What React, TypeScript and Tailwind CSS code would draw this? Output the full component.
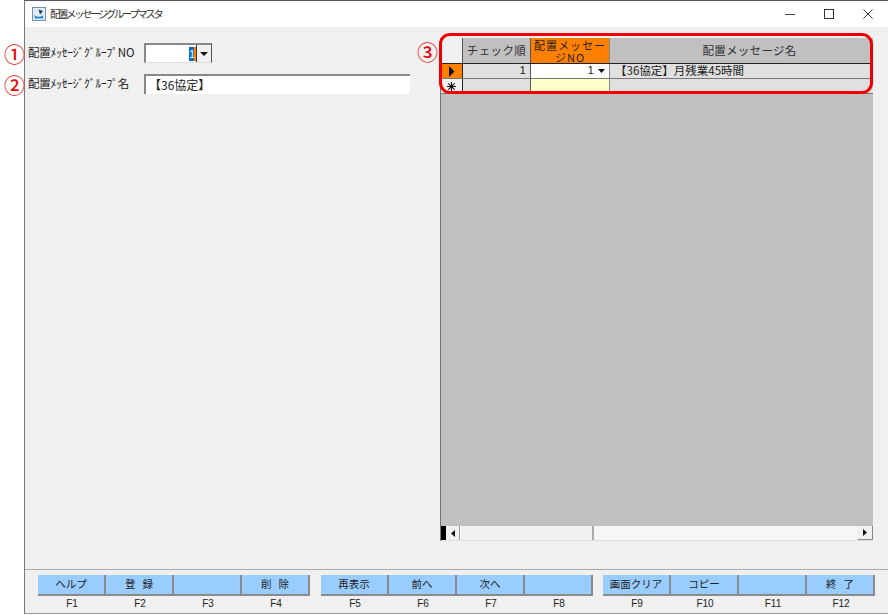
import React from 'react';

const font = "font-['Noto_Sans_CJK_JP','Liberation_Sans',sans-serif]";

const leftKeys = [
  { label: 'ヘルプ', key: 'F1' },
  { label: '登 録', key: 'F2' },
  { label: '', key: 'F3' },
  { label: '削 除', key: 'F4' },
];
const midKeys = [
  { label: '再表示', key: 'F5' },
  { label: '前へ', key: 'F6' },
  { label: '次へ', key: 'F7' },
  { label: '', key: 'F8' },
];
const rightKeys = [
  { label: '画面クリア', key: 'F9' },
  { label: 'コピー', key: 'F10' },
  { label: '', key: 'F11' },
  { label: '終 了', key: 'F12' },
];

function KeyGroup({ keys }: { keys: { label: string; key: string }[] }) {
  return (
    <div className="flex">
      {keys.map((k) => (
        <div key={k.key} className="w-[68px] flex flex-col items-center">
          <div className="w-full h-[21px] bg-[#99ccff] border-r-2 border-b-2 border-[#8a8a8a] flex items-center justify-center text-[10.5px] leading-none text-[#222] whitespace-pre">
            {k.label.replace(' ', '   ')}
          </div>
          <div className="mt-[1px] text-[10px] leading-[14px] text-[#222] font-['Liberation_Sans',sans-serif]">{k.key}</div>
        </div>
      ))}
    </div>
  );
}

function FormRow({ num, label, children }: { num: string; label: string; children: React.ReactNode }) {
  return (
    <div className="flex items-center h-[20px]">
      <span className="w-[24px] text-[21px] leading-none font-medium text-[#e01010] text-left -ml-[21px]">{num}</span>
      <span className="w-[116px] text-[11.5px] tracking-[-0.2px] text-[#222] whitespace-nowrap">{label}</span>
      {children}
    </div>
  );
}

function Grid() {
  return (
    <div className="relative w-[433px] h-[503px] flex flex-col bg-[#c0c0c0] border-l border-[#777] text-[#222]">
      {/* header */}
      <div className="flex h-[26px] border-b border-[#222] text-[11.5px]">
        <div className="w-[22px] bg-[#f0f0f0] border-r border-[#555]" />
        <div className="w-[68px] bg-[#c0c0c0] border-r border-[#555] flex items-center justify-center tracking-[0.4px] text-[#333] whitespace-nowrap">チェック順</div>
        <div className="w-[79px] bg-[#ff8000] border-r border-[#888] flex flex-col items-center justify-center text-[11px] leading-[12px] tracking-[1px] text-[#222]">
          <span className="whitespace-nowrap">配置メッセー</span>
          <span>ジNO</span>
        </div>
        <div className="flex-1 bg-[#c0c0c0] flex items-center justify-center pl-[16px] tracking-[0.3px] text-[#333]">配置メッセージ名</div>
      </div>
      {/* current row */}
      <div className="flex h-[15px] border-b border-[#777] text-[11.5px] leading-none">
        <div className="w-[22px] bg-[#ff8000] border-r border-[#222] flex items-center justify-center">
          <svg width="7" height="11" viewBox="0 0 7 11"><path d="M1 0 L6.5 5.5 L1 11 Z" fill="#111" /></svg>
        </div>
        <div className="w-[68px] bg-[#e0e0e0] border-r border-[#555] flex items-center justify-end pr-[4px] font-['Liberation_Sans',sans-serif]">1</div>
        <div className="w-[79px] bg-white border-r border-[#888] flex items-center justify-end">
          <span className="font-['Liberation_Sans',sans-serif]">1</span>
          <span className="w-[15px] h-full flex items-center justify-center">
            <svg width="7" height="4" viewBox="0 0 7 4"><path d="M0 0 H7 L3.5 4 Z" fill="#111" /></svg>
          </span>
        </div>
        <div className="flex-1 bg-[#e0e0e0] flex items-center pl-[5px] whitespace-nowrap">【36協定】月残業45時間</div>
      </div>
      {/* new row */}
      <div className="flex h-[15px] border-b border-[#777] text-[12px] leading-none">
        <div className="w-[22px] bg-[#f0f0f0] border-r border-[#222] flex items-center justify-center">
          <svg width="9" height="9" viewBox="0 0 9 9" stroke="#111" strokeWidth="1.1"><path d="M4.5 0 V9 M0 4.5 H9 M1.3 1.3 L7.7 7.7 M7.7 1.3 L1.3 7.7" /></svg>
        </div>
        <div className="w-[68px] bg-[#e0e0e0] border-r border-[#555]" />
        <div className="w-[79px] bg-[#ffffcc] border-r border-[#888]" />
        <div className="flex-1 bg-[#e0e0e0]" />
      </div>
      <div className="flex-1" />
      {/* scrollbar */}
      <div className="flex h-[15px] bg-[#f6f6f6] border-b border-[#ddd]">
        <div className="w-[5px] bg-black" />
        <div className="w-[14px] bg-[#f0f0f0] border-r border-[#999] flex items-center justify-center">
          <svg width="4" height="7" viewBox="0 0 4 7"><path d="M4 0 V7 L0 3.5 Z" fill="#111" /></svg>
        </div>
        <div className="w-[134px] bg-[#f0f0f0] border-l border-white border-r-2 border-r-[#aaa]" />
        <div className="flex-1" />
        <div className="w-[15px] bg-[#f0f0f0] border-r border-b border-[#888] flex items-center justify-center">
          <svg width="4" height="7" viewBox="0 0 4 7"><path d="M0 0 V7 L4 3.5 Z" fill="#111" /></svg>
        </div>
      </div>
      {/* annotation over the grid */}
      <div className="absolute left-[-2px] top-[-5px] w-[434px] h-[61px] border-[3px] border-[#f00000] rounded-[11px]" />
    </div>
  );
}

export default function App() {
  return (
    <div className={`w-[888px] h-[615px] bg-white pl-[24px] pb-[1px] overflow-hidden ${font}`}>
      <div className="h-full flex flex-col border-l border-[#777] border-t border-t-[#556]">
        {/* title bar */}
        <div className="h-[26px] bg-white flex items-center shrink-0">
          <svg className="ml-[6px]" width="16" height="16" viewBox="0 0 16 16">
            <rect x="1.5" y="1.5" width="13" height="13" fill="#dcecf8" stroke="#6f93b5" />
            <path d="M3 8.5 C4.5 11 8 11.5 12 9.5 L12 12.5 L4 12.5 Z" fill="#2f86d6" />
            <path d="M7.5 3.5 L12 5 L9 8.5 Z" fill="#2b3a4a" />
          </svg>
          <span className="ml-[3px] text-[10.5px] tracking-[-2.5px] text-[#333] whitespace-nowrap">配置メッセージグループマスタ</span>
          <div className="flex-1" />
          <div className="flex items-center text-[#333]">
            <svg width="10" height="10" viewBox="0 0 10 10" className="mr-[29px]"><path d="M0 5.5 H10" stroke="#444" /></svg>
            <svg width="10" height="10" viewBox="0 0 10 10" className="mr-[29px]"><rect x="0.5" y="0.5" width="9" height="9" fill="none" stroke="#333" /></svg>
            <svg width="10" height="10" viewBox="0 0 10 10" className="mr-[15px]"><path d="M0.5 0.5 L9.5 9.5 M9.5 0.5 L0.5 9.5" stroke="#333" /></svg>
          </div>
        </div>

        {/* body */}
        <div className="flex-1 bg-[#f0f0f0] flex min-h-0">
          <div className="w-[391px] pt-[16px] shrink-0 flex flex-col gap-[11px]">
            <FormRow num="①" label="配置ﾒｯｾｰｼﾞｸﾞﾙｰﾌﾟNO">
              <div className="w-[68px] h-[20px] bg-white border-2 border-r border-b border-[#888] border-r-[#555] border-b-[#ddd] flex">
                <div className="flex-1 flex justify-end items-center">
                  <span className="h-[14px] w-[7px] bg-[#0a6cc8] text-white text-[11px] leading-[14px] text-center font-['Liberation_Sans',sans-serif] border-r-2 border-[#ff8000]">1</span>
                </div>
                <div className="w-[15px] bg-[#f0f0f0] border-l border-[#333] flex items-center justify-center">
                  <svg width="8" height="4" viewBox="0 0 8 4"><path d="M0 0 H8 L4 4 Z" fill="#111" /></svg>
                </div>
              </div>
            </FormRow>
            <FormRow num="②" label="配置ﾒｯｾｰｼﾞｸﾞﾙｰﾌﾟ名">
              <div className="w-[266px] h-[20px] bg-white border-t-2 border-l-2 border-[#888] flex items-center pl-[3px] text-[12px] leading-none text-[#222] whitespace-nowrap">【36協定】</div>
            </FormRow>
          </div>
          <div className="w-[24px] pt-[13px] pl-[1px] shrink-0">
            <span className="block text-[21px] leading-[22px] font-medium text-[#e01010]">③</span>
          </div>
          <div className="pt-[11px] shrink-0">
            <Grid />
          </div>
        </div>

        {/* function keys */}
        <div className="h-[45px] shrink-0 bg-[#f0f0f0] border-t border-[#aaa] border-b border-b-[#999] pt-[5px] pl-[13px] flex text-[#222]">
          <KeyGroup keys={leftKeys} />
          <div className="w-[11px]" />
          <KeyGroup keys={midKeys} />
          <div className="w-[10px]" />
          <KeyGroup keys={rightKeys} />
        </div>
      </div>
    </div>
  );
}
